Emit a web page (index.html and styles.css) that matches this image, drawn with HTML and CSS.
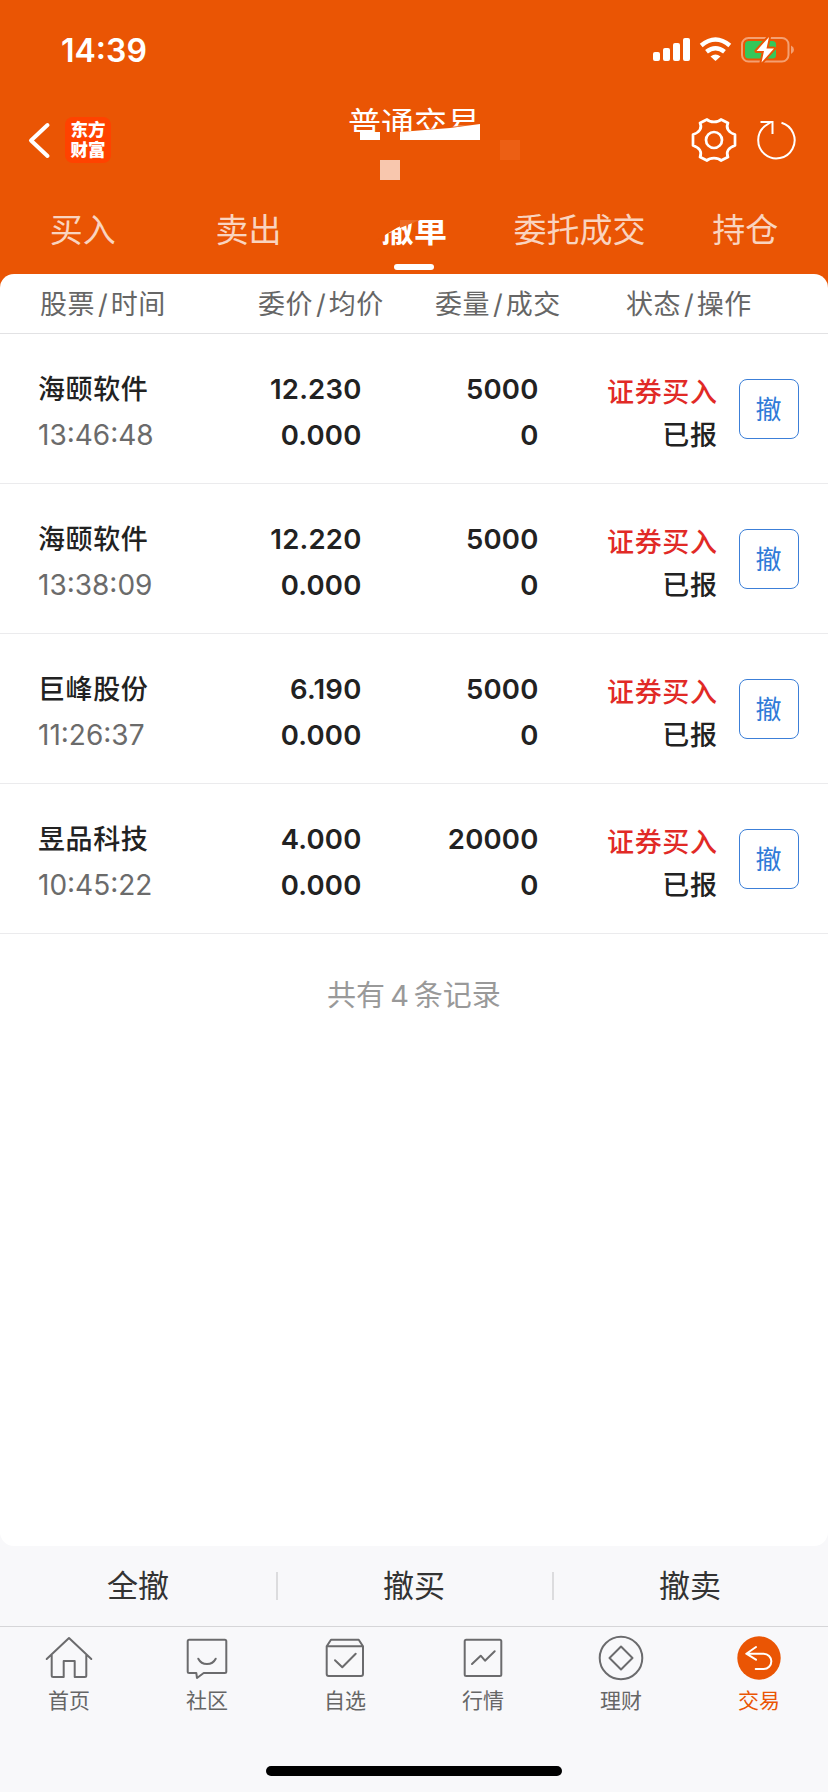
FILE: index.html
```
<!DOCTYPE html>
<html lang="zh-CN">
<head>
    <meta charset="UTF-8">
    <meta name="viewport" content="width=device-width, initial-scale=1.0">
    <title>普通交易</title>
    <link rel="stylesheet" href="styles.css">
</head>
<body>

<header class="header">
    <div class="status-bar">
        <span class="clock">14:39</span>
        <svg class="status-icons" viewBox="0 0 144 28" width="144" height="28">
            <g fill="#fff">
                <rect x="0" y="16" width="7" height="9" rx="2"/>
                <rect x="10" y="12" width="7" height="13" rx="2"/>
                <rect x="20" y="7" width="7" height="18" rx="2"/>
                <rect x="30" y="2" width="7" height="23" rx="2"/>
                <path d="M62.500 25 L57.500 20.500 Q62.500 16.500 67.500 20.500 Z"/>
            </g>
            <g fill="none" stroke="#fff" stroke-width="4.400">
                <path d="M48.200 9.500 Q62.500 -2.500 76.800 9.500"/>
                <path d="M53.500 15.800 Q62.500 8.500 71.500 15.800"/>
            </g>
            <rect x="89" y="2" width="46.500" height="23.500" rx="6.500" fill="none" stroke="#f4a072" stroke-width="2"/>
            <path d="M138 9.500 Q141 11 141 13.700 Q141 16.500 138 18 Z" fill="#f4a072"/>
            <rect x="92" y="5" width="31" height="17.500" rx="3.500" fill="#34c759"/>
            <path d="M116 1 L103.500 15 H111 L108.500 26.500 L121 12.500 H113.500 Z" fill="#fff" stroke="#ea5504" stroke-width="4" paint-order="stroke" stroke-linejoin="round"/>
        </svg>
    </div>

    <div class="nav-bar">
        <div class="nav-left">
            <svg class="back" viewBox="0 0 24 40" width="24" height="40">
                <path d="M20.500 5 L4 20.500 L20.500 36" fill="none" stroke="#fff" stroke-width="4" stroke-linecap="round" stroke-linejoin="round"/>
            </svg>
            <div class="logo">东方<br>财富</div>
        </div>
        <div class="title">
            <span class="title-text">普通交易</span>
            <svg class="title-blocks" viewBox="0 0 240 90" width="240" height="90">
                <path d="M0 42 H20 V50 H40 V42 H60 L140 34 V60 H0 Z" fill="#ea5504"/>
                <path d="M20 42 H40 V50 H20 Z M60 42 L110 38 L140 34 V50 H60 Z" fill="#fff"/>
                <rect x="40" y="70" width="20" height="20" fill="#f8c7ae"/>
                <rect x="160" y="50" width="20" height="20" fill="#ec5f14"/>
            </svg>
        </div>
        <div class="nav-right">
            <svg viewBox="-24 -24 48 48" width="48" height="48">
                <g fill="none" stroke="#fff" stroke-width="2.700" stroke-linejoin="round">
                    <circle r="8"/>
                    <path d="M-7 -20.500 C-4 -17.300 4 -17.300 7 -20.500 L14 -17 C11.500 -12 14.500 -7.500 21 -5.500 V5.500 C14.500 7.500 11.500 12 14 17 L7 20.500 C4 17.300 -4 17.300 -7 20.500 L-14 17 C-11.500 12 -14.500 7.500 -21 5.500 V-5.500 C-14.500 -7.500 -11.500 -12 -14 -17 Z"/>
                </g>
            </svg>
            <svg viewBox="-24 -24 48 48" width="48" height="48">
                <path d="M4.500 -17.300 A18.200 18.200 0 1 1 -12 -14 L-6 -18 M-16.500 -18 H-4.500 V-6" fill="none" stroke="#fff" stroke-width="2"/>
            </svg>
        </div>
    </div>

    <nav class="tabs">
        <span class="tab">买入</span>
        <span class="tab">卖出</span>
        <span class="tab active">撤单
            <svg class="tab-blocks" viewBox="0 0 80 40" width="80" height="40">
                <path d="M0 0 H80 V15 H45 L25 21 L15 27 L0 36 Z" fill="#ea5504"/>
                <path d="M25 15 H45 L25 23 Z" fill="#ed6a24"/>
            </svg>
        </span>
        <span class="tab">委托成交</span>
        <span class="tab">持仓</span>
    </nav>
</header>

<main class="orders">
    <div class="order-head">
        <span>股票<i>/</i>时间</span>
        <span>委价<i>/</i>均价</span>
        <span>委量<i>/</i>成交</span>
        <span>状态<i>/</i>操作</span>
    </div>

    <div class="order">
        <div class="stock"><b>海颐软件</b><span class="time">13:46:48</span></div>
        <div class="num"><span>12.230</span><span>0.000</span></div>
        <div class="num"><span>5000</span><span>0</span></div>
        <div class="state"><span class="buy">证券买入</span><span>已报</span></div>
        <button class="cancel">撤</button>
    </div>
    <div class="order">
        <div class="stock"><b>海颐软件</b><span class="time">13:38:09</span></div>
        <div class="num"><span>12.220</span><span>0.000</span></div>
        <div class="num"><span>5000</span><span>0</span></div>
        <div class="state"><span class="buy">证券买入</span><span>已报</span></div>
        <button class="cancel">撤</button>
    </div>
    <div class="order">
        <div class="stock"><b>巨峰股份</b><span class="time">11:26:37</span></div>
        <div class="num"><span>6.190</span><span>0.000</span></div>
        <div class="num"><span>5000</span><span>0</span></div>
        <div class="state"><span class="buy">证券买入</span><span>已报</span></div>
        <button class="cancel">撤</button>
    </div>
    <div class="order">
        <div class="stock"><b>昱品科技</b><span class="time">10:45:22</span></div>
        <div class="num"><span>4.000</span><span>0.000</span></div>
        <div class="num"><span>20000</span><span>0</span></div>
        <div class="state"><span class="buy">证券买入</span><span>已报</span></div>
        <button class="cancel">撤</button>
    </div>

    <p class="total">共有<i>4</i>条记录</p>
</main>

<div class="actions">
    <span>全撤</span>
    <span>撤买</span>
    <span>撤卖</span>
</div>

<footer class="tab-bar">
    <a class="item">
        <svg viewBox="0 0 48 48" width="48" height="48">
            <path d="M1.700 25 L24 4 L46.300 25 M6.700 21 V41.500 Q6.700 43 8.200 43 H18.700 V27 H29.700 V43 H39.800 Q41.300 43 41.300 41.500 V21"/>
        </svg>
        首页
    </a>
    <a class="item">
        <svg viewBox="0 0 48 48" width="48" height="48">
            <path d="M6.200 5.700 H41.800 Q43.300 5.700 43.300 7.200 V37.500 Q43.300 39 41.800 39 H20.700 L14 44 L13.300 39 H6.200 Q4.700 39 4.700 37.500 V7.200 Q4.700 5.700 6.200 5.700 Z M15.300 24.700 Q18 30 24 30 Q30 30 32.700 24.700"/>
        </svg>
        社区
    </a>
    <a class="item">
        <svg viewBox="0 0 48 48" width="48" height="48">
            <path d="M5.700 12.300 L10 5.700 H37.700 L42 12.300 V40 Q42 42 40 42 H7.700 Q5.700 42 5.700 40 Z H42 M14 26.300 L21.300 33.300 L34.700 19.700"/>
        </svg>
        自选
    </a>
    <a class="item">
        <svg viewBox="0 0 48 48" width="48" height="48">
            <rect x="5.700" y="5.700" width="36.600" height="36.300" rx="1.500"/>
            <path d="M13 30 L21.700 21.700 L26 26.700 L35.700 17.300"/>
        </svg>
        行情
    </a>
    <a class="item">
        <svg viewBox="0 0 48 48" width="48" height="48">
            <circle cx="24" cy="24" r="21.300"/>
            <path d="M24 12.500 L35.500 24 L24 35.500 L12.500 24 Z"/>
        </svg>
        理财
    </a>
    <a class="item current">
        <svg viewBox="0 0 48 48" width="48" height="48">
            <circle class="disc" cx="24" cy="24" r="21.700"/>
            <path d="M21 13 L11.300 19.700 L21 25.700 M11.300 19.700 H28.700 A7.650 7.650 0 0 1 28.700 35 H20.700"/>
        </svg>
        交易
    </a>
    <div class="home-indicator"></div>
</footer>

</body>
</html>
```
FILE: styles.css
```
* {
    box-sizing: border-box;
}
body {
    margin: 0;
    width: 828px;
    height: 1792px;
    display: flex;
    flex-direction: column;
    overflow: hidden;
    font-family: Inter, "Noto Sans CJK SC", sans-serif;
    background: linear-gradient(#ea5504 400px, #f8f8fa 400px);
    color: #222;
}
i {
    font-style: normal;
}
.header {
    height: 274px;
    color: #fff;
    flex: none;
}
.status-bar {
    height: 100px;
    padding: 0 31px 0 61px;
    display: flex;
    align-items: center;
    justify-content: space-between;
}
.clock {
    font-size: 32px;
    font-weight: 600;
}
.nav-bar {
    height: 80px;
    padding: 0 27px;
    display: grid;
    grid-template-columns: 1fr 240px 1fr;
    align-items: center;
}
.nav-left {
    display: flex;
    align-items: center;
    gap: 14px;
}
.logo {
    width: 46px;
    height: 46px;
    border-radius: 8px;
    background: #ff4200;
    font: 900 17.5px/20px "Noto Sans CJK SC", sans-serif;
    text-align: center;
    padding-top: 2px;
}
.title {
    position: relative;
    height: 80px;
    text-align: center;
    font-size: 33px;
    line-height: 49px;
}
.title-blocks {
    position: absolute;
    left: 46px;
    top: -10px;
}
.nav-right {
    display: flex;
    justify-content: flex-end;
    gap: 15px;
}
.tabs {
    height: 94px;
    display: grid;
    grid-template-columns: repeat(5, 1fr);
    text-align: center;
    font-size: 33px;
    line-height: 100px;
    color: rgba(255, 255, 255, 0.75);
}
.tab {
    position: relative;
}
.tab.active {
    color: #fff;
    font-weight: bold;
}
.tab.active::after {
    content: "";
    position: absolute;
    left: 63px;
    top: 84px;
    width: 40px;
    height: 6px;
    border-radius: 3px;
    background: #fff;
}
.tab-blocks {
    position: absolute;
    left: 44px;
    top: 25px;
}
.orders {
    flex: 1;
    background: #fff;
    border-radius: 14px;
}
.order-head {
    height: 60px;
    padding-left: 40px;
    display: grid;
    grid-template-columns: 218px 177px 191px 1fr;
    border-bottom: 1px solid #e2e2e4;
    font-size: 27px;
    line-height: 62px;
    letter-spacing: 0.5px;
    color: #666;
}
.order-head i {
    padding: 0 2.5px 0 3px;
}
.order {
    height: 150px;
    padding-left: 38px;
    display: grid;
    grid-template-columns: 162px 161.5px 177px 179px 60px;
    align-items: center;
    border-bottom: 1px solid #ebebed;
    font-size: 27px;
}
.stock, .num, .state {
    display: flex;
    flex-direction: column;
    line-height: 46px;
    padding-top: 7px;
}
.stock {
    padding-top: 8px;
}
.stock b, .state span {
    font-weight: 500;
    letter-spacing: 0.6px;
}
.stock .time {
    font-size: 28px;
    line-height: 45px;
    color: #6b6b6b;
}
.num {
    text-align: right;
    font-size: 27.5px;
    font-weight: 600;
    letter-spacing: 0.2px;
}
.state {
    padding-top: 11px;
    line-height: 43px;
    text-align: right;
}
.state .buy {
    color: #e12a26;
}
.cancel {
    width: 60px;
    height: 60px;
    margin-left: 21px;
    padding: 0 0 2px;
    border: 1px solid #3c7fd8;
    border-radius: 8px;
    background: #fff;
    font: 26px "Noto Sans CJK SC", sans-serif;
    color: #2f7ad8;
}
.total {
    margin: 0;
    padding-top: 32px;
    text-align: center;
    font-size: 29px;
    line-height: 60px;
    color: #999;
}
.total i {
    padding: 0 5px;
}
.actions {
    height: 80px;
    display: grid;
    grid-template-columns: repeat(3, 1fr);
    font-size: 31px;
    line-height: 80px;
    text-align: center;
    color: #333;
}
.actions span + span {
    background: linear-gradient(#dcdcde, #dcdcde) left center / 2px 28px no-repeat;
}
.tab-bar {
    position: relative;
    height: 166px;
    padding-top: 7px;
    border-top: 1px solid #d6d6d8;
    display: grid;
    grid-template-columns: repeat(6, 1fr);
}
.item {
    display: flex;
    flex-direction: column;
    align-items: center;
    font-size: 21px;
    line-height: 37px;
    color: #666;
}
.item svg {
    fill: none;
    stroke: #6b6b6d;
    stroke-width: 2;
    stroke-linecap: round;
    stroke-linejoin: round;
}
.item.current {
    color: #ea5504;
}
.item.current svg {
    stroke: #fff;
}
.item .disc {
    fill: #ea5504;
    stroke: none;
}
.home-indicator {
    position: absolute;
    left: 266px;
    bottom: 16px;
    width: 296px;
    height: 10px;
    border-radius: 5px;
    background: #000;
}
```
